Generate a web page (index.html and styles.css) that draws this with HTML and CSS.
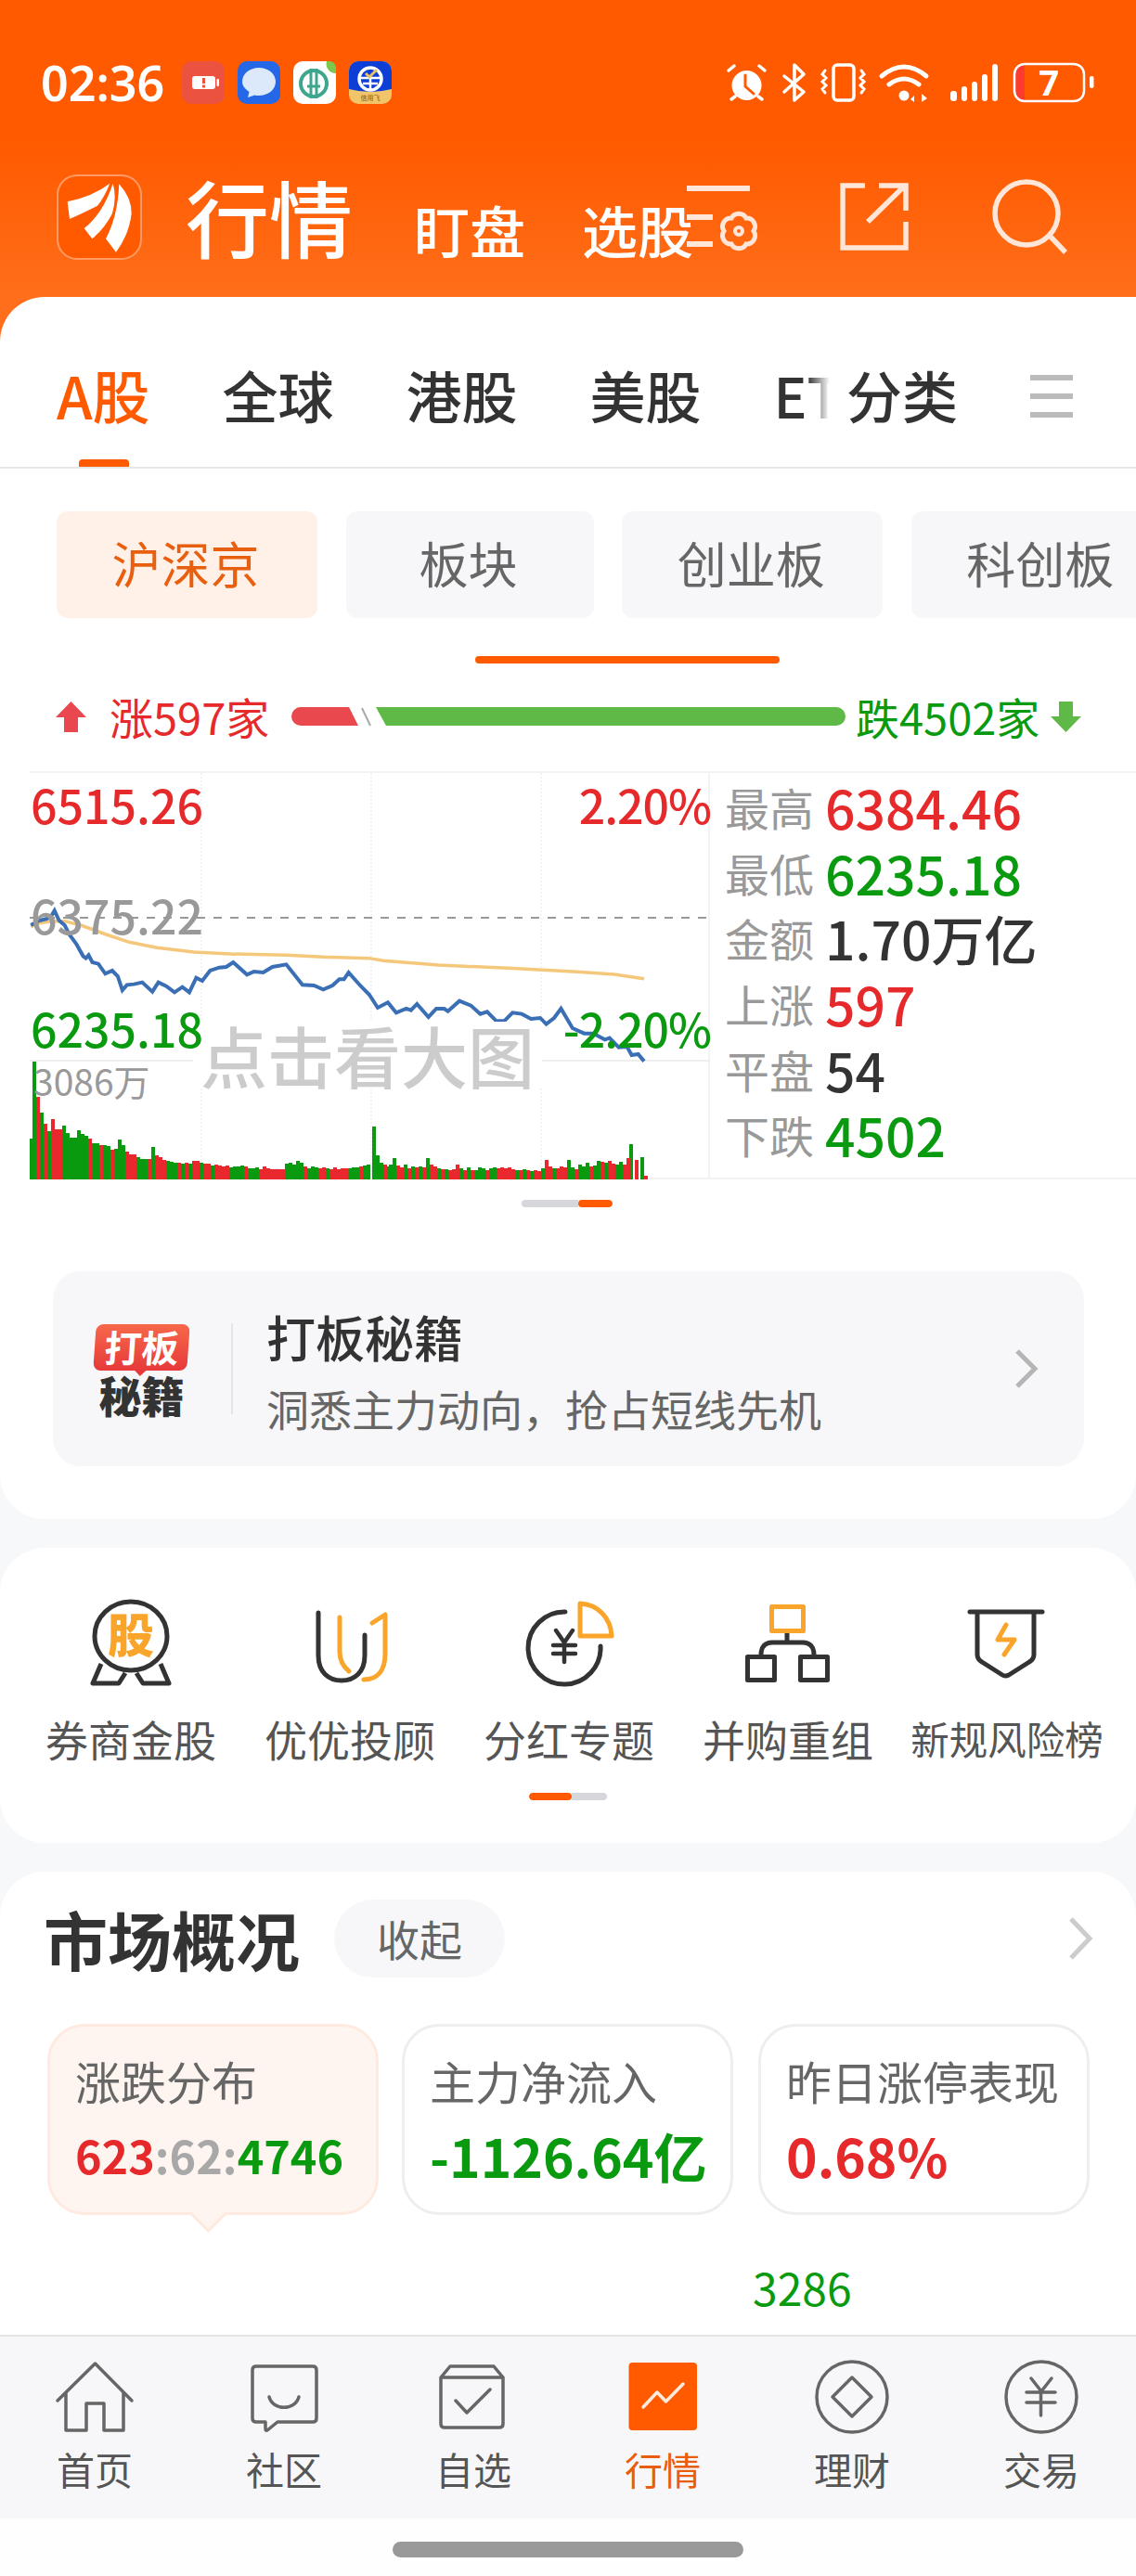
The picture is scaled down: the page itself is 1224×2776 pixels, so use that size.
FILE: index.html
```html
<!DOCTYPE html>
<html lang="zh">
<head>
    <meta charset="UTF-8">
    <meta name="viewport" content="width=device-width, initial-scale=1.0">
    <title>行情</title>
    <link rel="stylesheet" href="styles.css">
</head>
<body>
<div class="page">
    <header class="top">
        <div class="status">
            <span class="time">02:36</span>
            <div class="notify">
                <svg width="46" height="46" viewBox="0 0 46 46"><rect width="46" height="46" rx="10" fill="#ec5240"/><rect x="11" y="16" width="25" height="14" rx="3" fill="#fff"/><rect x="37.500" y="19" width="2.500" height="8" rx="1" fill="#fff"/><rect x="22" y="18" width="3" height="6" fill="#ec5240"/><rect x="22" y="25.500" width="3" height="3" fill="#ec5240"/></svg>
                <svg width="46" height="46" viewBox="0 0 46 46"><rect width="46" height="46" rx="10" fill="#2468e8"/><path d="M23 7c10 0 18 6.500 18 15s-8 15-18 15c-2 0-3-.2-4.500-.6L11 39l1.500-6C8 30 5 26 5 22 5 13.500 13 7 23 7z" fill="#dce9fb"/></svg>
                <svg width="46" height="46" viewBox="0 0 46 46"><rect width="46" height="46" rx="10" fill="#fff"/><circle cx="22" cy="24" r="14" fill="none" stroke="#3fa68e" stroke-width="4"/><path d="M19 8v32M25 8v32M15 27h14" fill="none" stroke="#3fa68e" stroke-width="3"/><path d="M36 0h3a7 7 0 0 1 7 7v6a10 10 0 0 1-10-13z" fill="#7cc84e"/></svg>
                <svg width="46" height="46" viewBox="0 0 46 46"><rect width="46" height="46" rx="10" fill="#f3c56b"/><path d="M0 10a10 10 0 0 1 10-10h26a10 10 0 0 1 10 10v20q-23 6-46 0z" fill="#0d3fd6"/><circle cx="23" cy="19" r="12" fill="none" stroke="#fff" stroke-width="3.500"/><path d="M11 18h24M23 18v13M15 24h16" fill="none" stroke="#fff" stroke-width="2.500"/><path d="M18 13l4 4 8-8" fill="none" stroke="#e8c16a" stroke-width="3"/><text class="tiny" x="23" y="42" text-anchor="middle">信用飞</text></svg>
            </div>
            <svg class="status-icons" width="395" height="46" viewBox="783 68 395 46">
                <g fill="none" stroke="#fff" stroke-linecap="round">
                    <circle cx="804.500" cy="94" r="16" fill="#fff" stroke="none"/>
                    <path d="M803 83v12l9 8" stroke="#ff5a00" stroke-width="3"/>
                    <path d="M785 78l6-5M824 78l-6-5M788 109l4-3M821 109l-4-3" stroke-width="3.500"/>
                    <path d="M845 84l21 17-10 9V72l10 10-21 19" stroke-width="3.500" stroke-linejoin="round"/>
                    <rect x="898" y="72" width="22" height="38" rx="4" stroke-width="3.500"/>
                    <path d="M889 78l-3 4 4 4-4 4 4 4-4 4 3 4M928 78l3 4-4 4 4 4-4 4 4 4-3 4" stroke-width="3"/>
                    <path d="M950 84q24-20 48 0M958 93q16-12 32 0" stroke-width="5"/>
                </g>
                <g fill="#fff">
                    <circle cx="974" cy="105" r="5.500"/>
                    <path d="M985 105l-4 4 4 3zM993 103l6 5-6 4z"/>
                    <rect x="1024" y="100" width="7" height="11" rx="3"/>
                    <rect x="1036" y="95" width="6" height="16" rx="3"/>
                    <rect x="1047" y="90" width="6" height="21" rx="3"/>
                    <rect x="1058" y="82" width="6" height="29" rx="3"/>
                    <rect x="1069" y="71" width="6" height="40" rx="3"/>
                    <rect x="1174" y="84" width="4.500" height="13" rx="2"/>
                </g>
                <path d="M1104 71h-1a10 10 0 0 0-10 10v20a10 10 0 0 0 10 10h1z" fill="#ff3b2f"/>
                <rect x="1093" y="71" width="75" height="40" rx="11" fill="none" stroke="#fff" stroke-width="2.500"/>
                <text class="batt" x="1130" y="105" text-anchor="middle">7</text>
            </svg>
        </div>
        <div class="app-bar">
            <div class="logo">
                <svg width="88" height="88" viewBox="2 2 88 88" fill="#fff"><path d="M11.700 29.300Q39 23.700 57.300 9.700Q52 23.700 44 33.700Q30 41 14 48Z"/><path d="M29.700 58Q50 42 60.700 9.700Q65 25 60 42Q52 58 38.300 69.300Z"/><path d="M53 69.300Q66 45 67.300 10.300Q80.700 25 80.700 42Q78 65 64 83.700Z"/></svg>
            </div>
            <h1 class="app-title">行情</h1>
            <a class="app-link first">盯盘</a>
            <a class="app-link">选股</a>
            <svg class="tool tool-filter" width="80" height="80" viewBox="738 196 80 80">
                <path d="M740 203h68M740 234h28M740 263h28" stroke-width="6"/>
                <path d="M812 249A9 9 0 0 1 804 262.900A9 9 0 0 1 788 262.900A9 9 0 0 1 780 249A9 9 0 0 1 788 235.100A9 9 0 0 1 804 235.100A9 9 0 0 1 812 249Z" stroke-width="5"/>
                <circle cx="796" cy="249" r="4" stroke-width="4"/>
            </svg>
            <svg class="tool tool-share" width="76" height="76" viewBox="904 196 76 76">
                <path d="M932 200h-24v67h68v-28M947 200h29v27M935 239l41-40" stroke-width="5.500"/>
            </svg>
            <svg class="tool tool-search" width="84" height="84" viewBox="1068 192 84 84">
                <circle cx="1106" cy="230" r="34" stroke-width="5.500"/>
                <path d="M1131 254l17 18" stroke-width="5.500"/>
            </svg>
        </div>
    </header>

    <main class="main">
        <section class="card quote-card">
            <nav class="tabs">
                <a class="tab active">A股</a>
                <a class="tab">全球</a>
                <a class="tab">港股</a>
                <a class="tab">美股</a>
                <a class="tab">ETF</a>
                <div class="tab-more">
                    <a class="tab">分类</a>
                    <svg width="46" height="46" viewBox="0 0 46 46"><path d="M1 3h44M1 23h44M1 43h44" stroke="#bbb" stroke-width="6" stroke-linecap="round"/></svg>
                </div>
            </nav>

            <div class="chips">
                <a class="chip wide on">沪深京</a>
                <a class="chip">板块</a>
                <a class="chip wide">创业板</a>
                <a class="chip wide">科创板</a>
            </div>
            <div class="chip-bar"></div>

            <div class="breadth">
                <svg width="33" height="33" viewBox="0 0 33 33"><path d="M16.500 0L33 17H24V33H9V17H0z" fill="#e8484e"/></svg>
                <span class="breadth-up red">涨597家</span>
                <svg class="breadth-bar" width="600" height="22" viewBox="314 761 600 22">
                    <path d="M324 762h52l10 20h-62a10 10 0 0 1 0-20z" fill="#e8484e"/>
                    <path d="M390 763l9 19" stroke="#aaa" stroke-width="2"/>
                    <path d="M405 762h496a10 10 0 0 1 0 20H416z" fill="#5fb946"/>
                </svg>
                <span class="breadth-down green">跌4502家</span>
                <svg class="breadth-arrow" width="33" height="33" viewBox="0 0 33 33"><path d="M16.500 33L33 16H24V0H9V16H0z" fill="#5fb946"/></svg>
            </div>

            <div class="market">
                <div class="chart">
                    <svg class="chart-svg" width="733" height="438" viewBox="32 831 733 438">
                        <path d="M217 831v438M400 831v438M583 831v438" stroke="#f3f3f3" stroke-width="2" stroke-dasharray="2 2"/>
                        <path d="M32 1141h733" stroke="#eee" stroke-width="2"/>
                        <path d="M32 987h733" stroke="#999" stroke-width="2" stroke-dasharray="9 9"/>
                        <path stroke="#0a9a0f" stroke-width="4" d="M33 1269v-44M37 1269v-127M45 1269v-72M53 1269v-52M69 1269v-58M73 1269v-50M77 1269v-45M81 1269v-45M85 1269v-53M89 1269v-49M93 1269v-47M101 1269v-39M105 1269v-39M113 1269v-37M117 1269v-36M125 1269v-33M129 1269v-43M133 1269v-37M149 1269v-24M153 1269v-22M157 1269v-22M165 1269v-35M181 1269v-20M185 1269v-19M189 1269v-18M197 1269v-17M205 1269v-17M217 1269v-18M229 1269v-15M249 1269v-13M253 1269v-14M257 1269v-14M261 1269v-15M269 1269v-12M273 1269v-12M277 1269v-13M309 1269v-17M313 1269v-18M317 1269v-16M321 1269v-20M325 1269v-18M333 1269v-12M337 1269v-14M341 1269v-13M353 1269v-12M377 1269v-12M381 1269v-13M385 1269v-13M393 1269v-15M397 1269v-16M403 1269v-57M407 1269v-26M411 1269v-18M417 1269v-14M421 1269v-16M425 1269v-23M437 1269v-16M445 1269v-14M453 1269v-14M461 1269v-23M473 1269v-12M481 1269v-11M497 1269v-12M505 1269v-13M513 1269v-10M517 1269v-13M521 1269v-12M529 1269v-12M533 1269v-13M557 1269v-10M565 1269v-11M573 1269v-9M585 1269v-12M597 1269v-12M613 1269v-21M617 1269v-13M625 1269v-16M629 1269v-14M633 1269v-18M641 1269v-15M645 1269v-20M653 1269v-18M665 1269v-16M669 1269v-19M680 1269v-38M692 1269v-24"/>
                        <path stroke="#e9282e" stroke-width="4" d="M41 1269v-89M49 1269v-60M57 1269v-65M61 1269v-54M65 1269v-54M97 1269v-44M109 1269v-37M121 1269v-32M137 1269v-30M141 1269v-27M145 1269v-27M161 1269v-22M169 1269v-26M173 1269v-24M177 1269v-21M193 1269v-18M201 1269v-18M209 1269v-20M213 1269v-20M221 1269v-17M225 1269v-17M233 1269v-16M237 1269v-15M241 1269v-14M245 1269v-15M265 1269v-14M281 1269v-11M285 1269v-14M289 1269v-12M293 1269v-11M297 1269v-11M301 1269v-11M305 1269v-11M329 1269v-14M345 1269v-12M349 1269v-13M357 1269v-11M361 1269v-13M365 1269v-11M369 1269v-12M373 1269v-12M389 1269v-14M415 1269v-16M429 1269v-15M433 1269v-13M441 1269v-12M449 1269v-13M457 1269v-13M465 1269v-16M469 1269v-14M477 1269v-11M485 1269v-10M489 1269v-11M493 1269v-16M501 1269v-10M509 1269v-10M525 1269v-10M537 1269v-12M541 1269v-13M545 1269v-12M549 1269v-13M553 1269v-11M561 1269v-10M569 1269v-10M577 1269v-10M581 1269v-9M589 1269v-21M593 1269v-14M601 1269v-12M605 1269v-14M609 1269v-13M621 1269v-11M637 1269v-14M649 1269v-19M657 1269v-20M661 1269v-17M673 1269v-16M677 1269v-23M686 1269v-21M696 1269v-4"/>
                        <g transform="translate(0 820) scale(.4975 .3333)" fill="none">
                            <path class="chart-line" stroke="#f5c77a" stroke-width="3.500" d="M67 530L85 518L110 512L140 512L175 525L230 555L280 580L340 598L420 612L500 618L620 622L700 628L800 632L830 640L950 654L1100 664L1250 676L1330 684L1395 698"/>
                            <path class="chart-line" stroke="#3a6fb5" stroke-width="4" d="M67 525L85 510L100 505L110 498L118 478L128 510L140 525L150 555L165 585L180 625L186 632L192 622L200 645L213 650L228 682L243 672L255 690L265 735L275 718L290 716L308 710L330 740L343 710L360 722L378 742L395 725L410 742L425 695L438 705L455 672L475 662L490 660L505 645L535 685L550 675L570 678L590 660L620 652L655 718L680 720L700 733L720 720L735 700L745 700L755 678L780 720L800 750L818 792L840 775L858 808L880 795L890 800L903 780L928 822L945 795L962 795L970 803L995 770L1020 785L1040 812L1055 805L1075 835L1092 835L1110 808L1130 812L1150 828L1170 825L1183 845L1200 825L1215 795L1240 858L1265 875L1285 875L1310 895L1320 890L1340 920L1358 918L1368 945L1382 942L1395 965"/>
                        </g>
                    </svg>
                    <span class="tag-big">点击看大图</span>
                    <span class="tag tag-max red">6515.26</span>
                    <span class="tag tag-max-pct red">2.20%</span>
                    <span class="tag tag-prev">6375.22</span>
                    <span class="tag tag-min green">6235.18</span>
                    <span class="tag tag-min-pct green">-2.20%</span>
                    <span class="tag tag-vol">3086万</span>
                </div>
                <dl class="stats">
                    <div class="stat"><dt>最高</dt><dd class="red">6384.46</dd></div>
                    <div class="stat"><dt>最低</dt><dd class="green">6235.18</dd></div>
                    <div class="stat"><dt>金额</dt><dd>1.70万亿</dd></div>
                    <div class="stat"><dt>上涨</dt><dd class="red">597</dd></div>
                    <div class="stat"><dt>平盘</dt><dd>54</dd></div>
                    <div class="stat"><dt>下跌</dt><dd class="green">4502</dd></div>
                </dl>
            </div>

            <div class="pager pager-chart"><i></i><b></b></div>

            <a class="promo">
                <div class="promo-logo">
                    <span class="promo-badge">打板</span>
                    <span class="promo-mark">秘籍</span>
                </div>
                <div class="promo-line"></div>
                <div class="promo-text">
                    <strong>打板秘籍</strong>
                    <span>洞悉主力动向，抢占短线先机</span>
                </div>
                <svg class="promo-arrow" width="26" height="44" viewBox="0 0 26 44"><path d="M3 3l19 19L3 41" fill="none" stroke="#b5b5b5" stroke-width="5"/></svg>
            </a>
        </section>

        <section class="card entry-card">
            <div class="entries">
                <a class="entry">
                    <svg width="100" height="100" viewBox="0 0 100 100" fill="none" stroke="#333" stroke-width="5" stroke-linejoin="round">
                        <ellipse cx="50" cy="43" rx="39" ry="37"/>
                        <path d="M18 73L9 94H37L44 83M82 73L91 94H63L56 83"/>
                        <text class="icon-glyph" x="50" y="61" text-anchor="middle">股</text>
                    </svg>
                    <span>券商金股</span>
                </a>
                <a class="entry">
                    <svg width="100" height="100" viewBox="0 0 100 100" fill="none" stroke-width="5" stroke-linecap="round">
                        <path d="M16 18V64C16 82 27 91 41 91C55 91 66 82 66 64V42" stroke="#333"/>
                        <path d="M39 23V60C39 70 43 76 49 81" stroke="#f9a52b"/>
                        <path d="M74 29L88 20V62C88 80 80 90 65 90" stroke="#f9a52b" stroke-linejoin="round"/>
                    </svg>
                    <span>优优投顾</span>
                </a>
                <a class="entry">
                    <svg width="100" height="100" viewBox="0 0 100 100" fill="none" stroke-width="5" stroke-linecap="round" stroke-linejoin="round">
                        <path d="M46 17A39 39 0 1 0 84 54" stroke="#333"/>
                        <path d="M36 37L45 50L54 37M33 53H57M33 62H57M45 50V71" stroke="#333" stroke-width="4.500"/>
                        <path d="M62 8V43H96C95 24 82 9 62 8Z" stroke="#f9a52b"/>
                    </svg>
                    <span>分红专题</span>
                </a>
                <a class="entry">
                    <svg width="100" height="100" viewBox="0 0 100 100" fill="none" stroke-width="5" stroke-linejoin="round">
                        <rect x="32.500" y="11.500" width="34" height="26" stroke="#f9a52b"/>
                        <path d="M49 40V50M21 63C21 54 26 50 33 50H66C73 50 78 54 78 63" stroke="#333"/>
                        <rect x="6.500" y="65.500" width="29" height="25" stroke="#333"/>
                        <rect x="63.500" y="65.500" width="29" height="25" stroke="#333"/>
                    </svg>
                    <span>并购重组</span>
                </a>
                <a class="entry">
                    <svg width="100" height="100" viewBox="0 0 100 100" fill="none" stroke-width="5" stroke-linecap="round" stroke-linejoin="round">
                        <path d="M10 17H88M18 17V63Q18 68 23 71L45 85Q48 87 52 85L74 71Q79 68 79 63V17" stroke="#333"/>
                        <path d="M49 31L40 47H58L47 63" stroke="#f9a52b"/>
                    </svg>
                    <span class="small">新规风险榜</span>
                </a>
            </div>
            <div class="pager pager-entry"><b></b><i></i></div>
        </section>

        <section class="card overview-card">
            <div class="overview-head">
                <h2>市场概况</h2>
                <a class="pill">收起</a>
                <svg class="overview-arrow" width="30" height="46" viewBox="0 0 30 46"><path d="M4 2l20 21L4 44" fill="none" stroke="#ccc" stroke-width="5"/></svg>
            </div>
            <div class="summary">
                <div class="summary-item on">
                    <span class="summary-label">涨跌分布</span>
                    <span class="summary-value ratio"><span class="red">623</span><span class="gray">:62:</span><span class="green">4746</span></span>
                </div>
                <div class="summary-item">
                    <span class="summary-label">主力净流入</span>
                    <span class="summary-value green">-1126.64亿</span>
                </div>
                <div class="summary-item">
                    <span class="summary-label">昨日涨停表现</span>
                    <span class="summary-value red">0.68%</span>
                </div>
            </div>
            <div class="overview-count green">3286</div>
        </section>
    </main>

    <nav class="bottom-nav">
        <a class="nav-item">
            <svg width="90" height="90" viewBox="0 0 90 90"><path d="M5 47L45.500 7L85 47M14 38V79H36V50H55V79H76V38"/></svg>
            <span>首页</span>
        </a>
        <a class="nav-item">
            <svg width="90" height="90" viewBox="0 0 90 90"><path d="M15 10H76Q80 10 80 14V66Q80 70 76 70H38L27 79Q25 80 25 77V70H15Q11 70 11 66V14Q11 10 15 10ZM29 43C33 58 57 58 61 43"/></svg>
            <span>社区</span>
        </a>
        <a class="nav-item">
            <svg width="90" height="90" viewBox="0 0 90 90"><path d="M10 22L20 10H67L77 22M10 22H77V72Q77 76 73 76H14Q10 76 10 72ZM26 47L38 60L63 35"/></svg>
            <span>自选</span>
        </a>
        <a class="nav-item active">
            <svg width="90" height="90" viewBox="0 0 90 90"><rect x="8.500" y="6" width="73.500" height="73" rx="4" fill="#ff5a00" stroke="none"/><path d="M24 54L39 38L48.500 48L67 29" stroke="#ffeadd"/></svg>
            <span>行情</span>
        </a>
        <a class="nav-item">
            <svg width="90" height="90" viewBox="0 0 90 90"><circle cx="45" cy="43" r="38"/><path d="M45 22L66 43L45 64L24 43Z"/></svg>
            <span>理财</span>
        </a>
        <a class="nav-item">
            <svg width="90" height="90" viewBox="0 0 90 90"><circle cx="45" cy="43" r="38"/><path d="M34 23L45 37L56 23M29 38H60M29 49H60M44.500 37V63"/></svg>
            <span>交易</span>
        </a>
    </nav>
    <div class="home-area"><div class="home-bar"></div></div>
</div>
</body>
</html>
```
FILE: styles.css
```css
* {
    box-sizing: border-box;
}

body {
    margin: 0;
    font-family: "Noto Sans CJK SC", "Noto Sans", sans-serif;
    color: #333;
}

a {
    display: block;
}

.red { color: #e62a2c; }
.green { color: #0a9a0f; }
.gray { color: #a8a8a8; }

.page {
    width: 1224px;
    height: 2776px;
    display: flex;
    flex-direction: column;
    overflow: hidden;
    background: #f7f8fa;
}

/* 顶部橙色区域 */
.top {
    height: 320px;
    flex: none;
    padding-top: 66px;
    background: linear-gradient(to bottom, #ff5a00 0, #ff5a00 150px, #ff6e1a 320px);
}

.status {
    display: flex;
    align-items: center;
    height: 46px;
    padding: 0 46px 0 44px;
}

.time {
    width: 152px;
    font-family: "Noto Sans", sans-serif;
    font-size: 52px;
    font-weight: 600;
    line-height: 46px;
    color: #fff;
}

.notify {
    display: flex;
    gap: 14px;
}

.tiny {
    font-size: 7px;
    fill: #7a5a10;
}

.status-icons {
    margin-left: auto;
    overflow: visible;
}

.batt {
    font-family: "Noto Sans", sans-serif;
    font-size: 38px;
    font-weight: 700;
    fill: #fff;
}

.app-bar {
    display: flex;
    align-items: flex-start;
    height: 92px;
    margin-top: 76px;
    padding-left: 61px;
}

.logo {
    width: 92px;
    height: 92px;
    display: flex;
    align-items: center;
    justify-content: center;
    background: #ff5a00;
    border: 2px solid rgba(255, 255, 255, 0.4);
    border-radius: 22px;
}

.app-title {
    margin: 0 0 0 47px;
    font-size: 90px;
    font-weight: 500;
    line-height: 88px;
    color: #fff;
}

.app-link {
    margin: 30px 0 0 61px;
    font-size: 60px;
    font-weight: 500;
    line-height: 58px;
    color: #fff;
}

.app-link.first {
    margin-left: 66px;
}

.tool {
    flex: none;
    fill: none;
    stroke: #ffe6d8;
}

.tool-filter {
    margin: 8px 0 0 -9px;
}

.tool-share {
    margin: 8px 0 0 86px;
}

.tool-search {
    margin: 4px 0 0 88px;
}

/* 卡片区域 */
.main {
    flex: 1;
    display: flex;
    flex-direction: column;
    gap: 31px;
    min-height: 0;
    background: linear-gradient(to bottom, #ff6e1a 0, #ff6e1a 60px, #f7f8fa 60px);
}

.card {
    background: #fff;
    border-radius: 48px;
}

.quote-card {
    height: 1317px;
    flex: none;
}

.tabs {
    position: relative;
    display: flex;
    gap: 78px;
    height: 185px;
    padding: 66px 0 0 61px;
    border-bottom: 2px solid #e8e8e8;
    overflow: hidden;
}

.tab {
    position: relative;
    flex: none;
    height: 117px;
    font-size: 60px;
    font-weight: 500;
    line-height: 78px;
    color: #333;
}

.tab.active {
    font-size: 62px;
    color: #ff5a00;
}

.tab.active::after {
    content: "";
    position: absolute;
    left: 24px;
    bottom: 0;
    width: 54px;
    height: 8px;
    background: #ff5a00;
    border-radius: 4px 4px 0 0;
}

.tab-more {
    position: absolute;
    top: 0;
    right: 0;
    bottom: 0;
    width: 354px;
    display: flex;
    align-items: flex-start;
    padding: 66px 0 0 42px;
    background: linear-gradient(to right, rgba(255, 255, 255, 0) 0, #fff 24px);
}

.tab-more svg {
    margin: 18px 0 0 78px;
}

.chips {
    display: flex;
    gap: 30.600px;
    margin: 46px 0 0 61px;
    overflow: hidden;
}

.chip {
    flex: none;
    width: 267px;
    height: 115px;
    padding-right: 3px;
    border-radius: 12px;
    background: #f7f7f9;
    font-size: 53px;
    line-height: 110px;
    text-align: center;
    color: #666;
}

.chip.wide {
    width: 281px;
}

.chip.on {
    background: #fff0e8;
    color: #e8600f;
}

.chip-bar {
    width: 328px;
    height: 8px;
    margin: 41px 0 0 512px;
    border-radius: 4px;
    background: #ff5a00;
}

.breadth {
    display: flex;
    align-items: center;
    height: 60px;
    margin-top: 27px;
    padding-left: 60px;
    font-size: 47px;
    line-height: 56px;
    white-space: nowrap;
}

.breadth-up {
    width: 196px;
    margin-left: 25px;
}

.breadth-bar {
    flex: none;
}

.breadth-down {
    width: 210px;
    margin-left: 8px;
}

/* 分时图 */
.market {
    display: flex;
    height: 440px;
    margin: 29px 0 0 32px;
    border-top: 2px solid #f3f3f3;
    border-bottom: 2px solid #f3f3f3;
}

.chart {
    position: relative;
    width: 733px;
    border-right: 2px solid #f3f3f3;
    flex: none;
}

.chart-svg {
    display: block;
    fill: none;
}

.chart-line {
    vector-effect: non-scaling-stroke;
}

.tag {
    position: absolute;
    font-size: 50px;
    font-weight: 500;
    line-height: 50px;
}

.tag-max { left: 1px; top: 8px; }
.tag-prev { left: 1px; top: 127px; color: #999; }
.tag-min { left: 1px; top: 249px; }

.tag-max-pct,
.tag-min-pct {
    right: -3px;
    letter-spacing: -1px;
}

.tag-max-pct { top: 8px; }
.tag-min-pct { top: 249px; }

.tag-vol {
    left: 4px;
    top: 311px;
    font-size: 39px;
    font-weight: 400;
    line-height: 41px;
    color: #999;
}

.tag-big {
    position: absolute;
    left: 176px;
    top: 268px;
    padding: 0 8px;
    background: #fff;
    font-size: 72px;
    font-weight: 500;
    line-height: 70px;
    color: #ccc;
}

.stats {
    margin: 0 0 0 16px;
    padding-top: 1px;
}

.stat {
    display: flex;
    align-items: center;
    gap: 12px;
    height: 70.600px;
}

.stat dt {
    font-size: 48px;
    color: #999;
}

.stat dd {
    margin: 0;
    font-size: 57px;
    font-weight: 500;
    line-height: 70px;
}

.pager {
    display: flex;
    height: 8px;
    border-radius: 4px;
    overflow: hidden;
}

.pager i {
    background: #d5d7db;
    flex: 1;
}

.pager b {
    background: #ff5a00;
    border-radius: 4px;
}

.pager-chart {
    width: 98px;
    margin: 22px 0 0 562px;
}

.pager-chart b {
    width: 37px;
}

.promo {
    display: flex;
    align-items: center;
    height: 210px;
    margin: 69px 56px 0 57px;
    padding-left: 45px;
    border-radius: 30px;
    background: #f7f7f9;
}

.promo-logo {
    display: flex;
    flex-direction: column;
    align-items: center;
    width: 101px;
    margin-top: 2px;
    flex: none;
}

.promo-badge {
    position: relative;
    width: 101px;
    height: 50px;
    border-radius: 8px;
    background: linear-gradient(to bottom, #f7684a, #e63a3a);
    transform: skewX(-4deg);
    font-size: 40px;
    font-weight: 700;
    line-height: 48px;
    text-align: center;
    color: #fff;
}

.promo-badge::after {
    content: "";
    position: absolute;
    left: 45px;
    bottom: -6px;
    border: 6px solid transparent;
    border-bottom: 0;
    border-top-color: #e63a3a;
}

.promo-mark {
    margin-top: 2px;
    font-size: 46px;
    font-weight: 900;
    line-height: 46px;
    color: #333;
}

.promo-line {
    width: 2px;
    height: 98px;
    margin-left: 46px;
    flex: none;
    background: #e5e5e5;
}

.promo-text {
    display: flex;
    flex-direction: column;
    margin-left: 36px;
    flex: 1;
}

.promo-text strong {
    font-size: 53px;
    font-weight: 500;
    line-height: 62px;
}

.promo-text span {
    margin-top: 21px;
    font-size: 46px;
    line-height: 50px;
    color: #666;
}

.promo-arrow {
    margin-right: 49px;
    flex: none;
}

/* 快捷入口 */
.entry-card {
    height: 318px;
    flex: none;
    padding-top: 52px;
}

.entries {
    display: grid;
    grid-template-columns: repeat(5, 236px);
    padding-left: 23px;
}

.entry {
    display: flex;
    flex-direction: column;
    align-items: center;
}

.entry span {
    margin-top: 23px;
    font-size: 46px;
    line-height: 60px;
    color: #555;
    white-space: nowrap;
}

.entry span.small {
    font-size: 41.500px;
}

.icon-glyph {
    font-size: 50px;
    font-weight: 900;
    fill: #f9a52b;
    stroke: none;
}

.pager-entry {
    width: 84px;
    margin: 29px 0 0 570px;
}

.pager-entry b {
    width: 46px;
}

/* 市场概况 */
.overview-card {
    flex: 1;
    min-height: 0;
    padding-top: 30px;
    border-radius: 48px 48px 0 0;
}

.overview-head {
    display: flex;
    align-items: center;
    height: 84px;
    padding-left: 47px;
}

.overview-head h2 {
    margin: 0;
    font-size: 69px;
    font-weight: 700;
    line-height: 84px;
}

.pill {
    width: 184px;
    height: 84px;
    margin-left: 37px;
    border-radius: 42px;
    background: #f7f7f9;
    font-size: 46px;
    line-height: 82px;
    text-align: center;
    color: #666;
}

.overview-arrow {
    margin-left: auto;
    margin-right: 44px;
}

.summary {
    display: flex;
    gap: 25px;
    margin: 50px 0 0 51px;
}

.summary-item {
    position: relative;
    display: flex;
    flex-direction: column;
    width: 357px;
    height: 206px;
    padding: 26px 0 0 27px;
    border: 3px solid #eee;
    border-radius: 40px;
}

.summary-item:last-child {
    margin-left: 2px;
}

.summary-item.on {
    background: #fff5f0;
    border-color: #ffeadf;
}

.summary-item.on::after {
    content: "";
    position: absolute;
    left: 156px;
    bottom: -16px;
    width: 26px;
    height: 26px;
    background: #fff5f0;
    border-right: 3px solid #ffeadf;
    border-bottom: 3px solid #ffeadf;
    transform: rotate(45deg);
}

.summary-label {
    font-size: 49px;
    line-height: 64px;
    color: #666;
    white-space: nowrap;
}

.summary-value {
    margin-top: 13px;
    font-size: 57px;
    font-weight: 700;
    line-height: 70px;
    white-space: nowrap;
}

.summary-value.ratio {
    font-size: 48.500px;
}

.overview-count {
    margin: 47px 0 0 811px;
    font-size: 48px;
    line-height: 60px;
}

/* 底部导航 */
.bottom-nav {
    display: grid;
    grid-template-columns: repeat(6, 204px);
    height: 198px;
    flex: none;
    padding-top: 22px;
    border-top: 2px solid #e4e4e6;
    background: #f7f7f9;
}

.nav-item {
    display: flex;
    flex-direction: column;
    align-items: center;
    font-size: 41px;
    line-height: 50px;
    color: #555;
}

.nav-item svg {
    fill: none;
    stroke: #666;
    stroke-width: 3.500;
    stroke-linejoin: round;
    stroke-linecap: round;
}

.nav-item span {
    margin-top: 5px;
}

.nav-item.active {
    color: #e85d10;
}

.home-area {
    height: 62px;
    flex: none;
    padding-top: 25px;
    background: #fefefe;
}

.home-bar {
    width: 378px;
    height: 17px;
    margin-left: 423px;
    border-radius: 9px;
    background: #999;
}
```
